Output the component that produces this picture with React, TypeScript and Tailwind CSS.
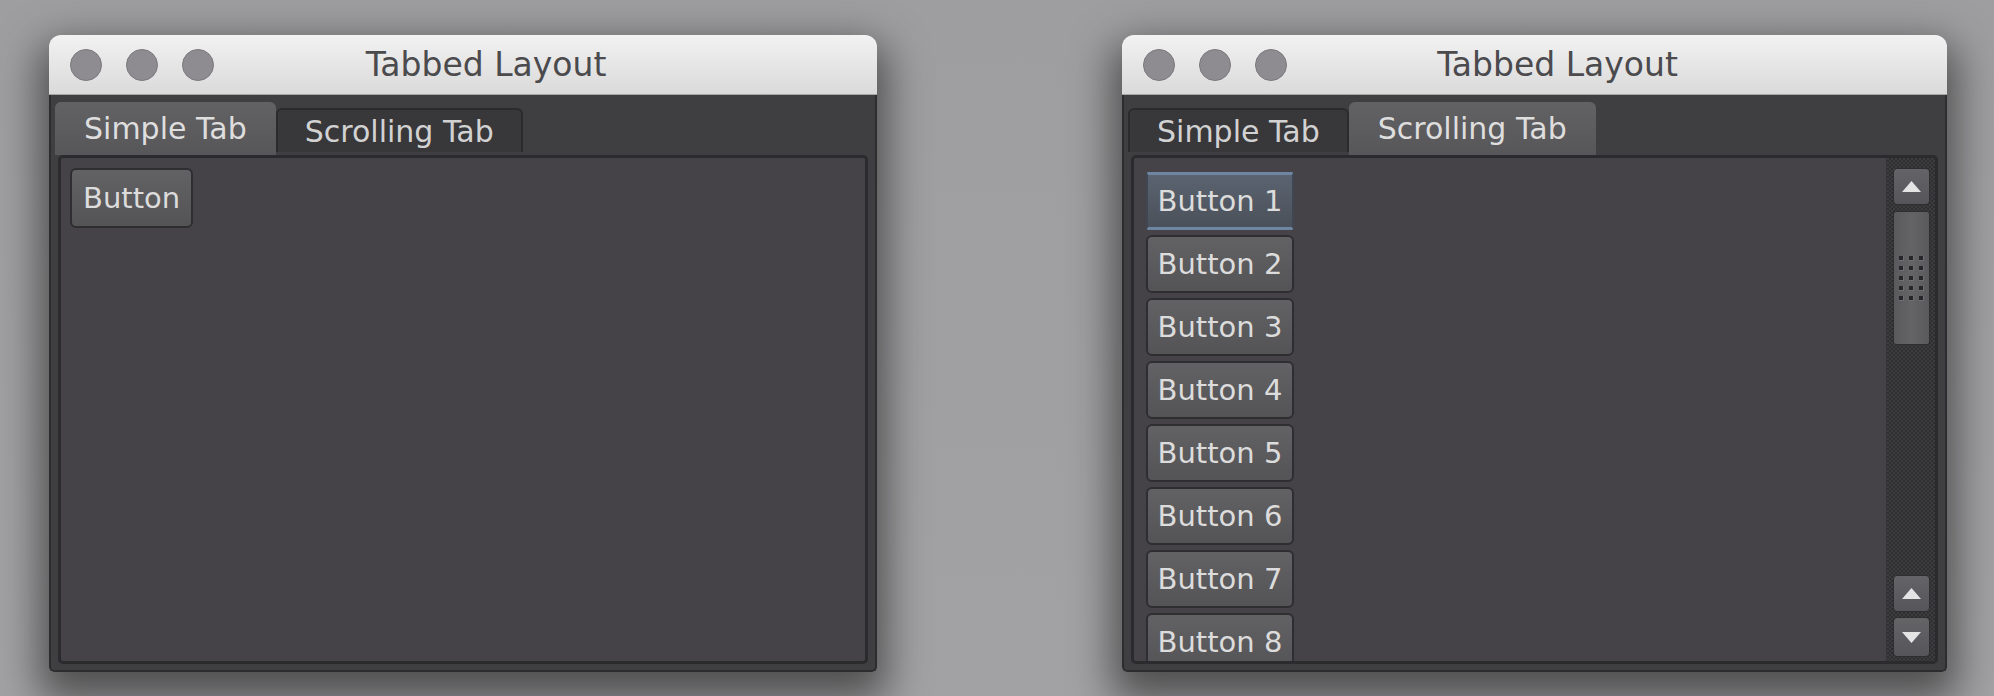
import React from "react";

type TabProps = { label: string; active?: boolean };

const TrafficLights = () => (
  <div className="flex gap-[24px]">
    {[0, 1, 2].map((i) => (
      <span
        key={i}
        className="size-[32px] rounded-full border border-[#7b797e] bg-[#8e8c91]"
      />
    ))}
  </div>
);

const TitleBar = () => (
  <div className="flex h-[60px] items-center rounded-t-[12px] border-b border-[#a6a6a6] bg-linear-to-b from-[#f2f2f2] to-[#dadada] pl-[21px]">
    <TrafficLights />
    <div className="flex-1 pr-[119px] text-center text-[33px] leading-none text-[#4b4a4d]">
      Tabbed Layout
    </div>
  </div>
);

const Tab = ({ label, active }: TabProps) =>
  active ? (
    <div className="flex h-[53px] items-center rounded-t-[6px] bg-linear-to-b from-[#626164] to-[#575659] px-[29px] text-[30px] leading-none text-[#dedede]">
      {label}
    </div>
  ) : (
    <div className="mt-[6px] flex h-[44px] items-center rounded-t-[6px] border-2 border-b-0 border-[#2b2a2d] bg-[#38373a] px-[27px] pt-[2px] text-[30px] leading-none text-[#d2d2d2]">
      {label}
    </div>
  );

const PushButton = ({ label, focused, wide }: { label: string; focused?: boolean; wide?: boolean }) => {
  if (focused) {
    return (
      <div className="flex h-[58px] w-[148px] shrink-0 items-center justify-center rounded-[3px] border-x-2 border-y-[3px] border-x-[#3e4753] border-y-[#6f86a2] bg-linear-to-b from-[#5a6370] to-[#4b515a] text-[29px] leading-none text-[#dcdcdc]">
        {label}
      </div>
    );
  }
  return (
    <div
      className={
        wide
          ? "flex h-[58px] w-[148px] shrink-0 items-center justify-center rounded-[6px] border-2 border-[#2e2d30] bg-linear-to-b from-[#626164] to-[#545356] text-[29px] leading-none text-[#dcdcdc]"
          : "flex h-[60px] items-center justify-center rounded-[6px] border-2 border-[#2e2d30] bg-linear-to-b from-[#626164] to-[#545356] px-[11px] text-[29px] leading-none text-[#dcdcdc]"
      }
    >
      {label}
    </div>
  );
};

const Arrow = ({ down }: { down?: boolean }) => (
  <svg width="19" height="11" viewBox="0 0 19 11">
    <polygon points={down ? "0,0 19,0 9.5,11" : "9.5,0 19,11 0,11"} fill="#e4e4e4" />
  </svg>
);

const ScrollButton = ({ down, className }: { down?: boolean; className: string }) => (
  <div className={className}>
    <Arrow down={down} />
  </div>
);

const ScrollBar = () => (
  <div className="flex w-[49px] shrink-0 flex-col items-center border-l border-[#363538] bg-[image:repeating-conic-gradient(#2f2e31_0%_25%,#3d3c3f_0%_50%)] bg-[length:4px_4px] pt-[10px] pb-[4px]">
    <ScrollButton className="flex h-[37px] w-[37px] items-center justify-center rounded-[4px] border border-[#2e2d30] bg-linear-to-b from-[#646366] to-[#56555a]" />
    {/* thumb */}
    <div className="mt-[6px] flex h-[134px] w-[37px] items-center justify-center rounded-[3px] border border-[#2e2d30] bg-linear-to-r from-[#5a595c] via-[#646366] to-[#5a595c]">
      <div className="grid grid-cols-3 gap-[5px]">
        {Array.from({ length: 15 }).map((_, i) => (
          <span key={i} className="size-[5px] border-b border-r border-[#6f6e72] bg-[#262528]" />
        ))}
      </div>
    </div>
    <div className="flex-1" />
    <ScrollButton className="flex h-[37px] w-[37px] items-center justify-center rounded-[4px] border border-[#2e2d30] bg-linear-to-b from-[#646366] to-[#56555a]" />
    <ScrollButton
      down
      className="mt-[5px] flex h-[40px] w-[37px] items-center justify-center rounded-[4px] border border-[#2e2d30] bg-linear-to-b from-[#646366] to-[#56555a]"
    />
  </div>
);

const SimpleWindow = () => (
  <div className="w-[828px] shrink-0 rounded-t-[12px] rounded-b-[5px] shadow-[0_18px_40px_10px_rgba(0,0,0,0.5)]">
    <TitleBar />
    <div className="rounded-b-[5px] border-x-2 border-b-2 border-[#2d2c2f] bg-[#3f3e41] pb-[6px]">
      <div className="flex h-[60px] items-start pl-[4px] pt-[7px]">
        <Tab label="Simple Tab" active />
        <Tab label="Scrolling Tab" />
      </div>
      <div className="mx-[7px] h-[509px] rounded-[5px] border-[3px] border-[#2b2a2d] bg-[#454347] pl-[9px] pt-[10px]">
        <div className="flex">
          <PushButton label="Button" />
        </div>
      </div>
    </div>
  </div>
);

const ScrollingWindow = () => (
  <div className="w-[825px] shrink-0 rounded-t-[12px] rounded-b-[5px] shadow-[0_18px_40px_10px_rgba(0,0,0,0.5)]">
    <TitleBar />
    <div className="rounded-b-[5px] border-x-2 border-b-2 border-[#2d2c2f] bg-[#3f3e41] pb-[6px]">
      <div className="flex h-[60px] items-start pl-[4px] pt-[7px]">
        <Tab label="Simple Tab" />
        <Tab label="Scrolling Tab" active />
      </div>
      <div className="mx-[7px] flex h-[509px] overflow-hidden rounded-[5px] border-[3px] border-[#2b2a2d] bg-[#454347]">
        <div className="flex flex-1 flex-col gap-[5px] overflow-hidden pl-[12px] pt-[14px]">
          {[1, 2, 3, 4, 5, 6, 7, 8].map((n) => (
            <PushButton key={n} label={`Button ${n}`} focused={n === 1} wide />
          ))}
        </div>
        <ScrollBar />
      </div>
    </div>
  </div>
);

export default function App() {
  return (
    <div className="flex h-[696px] w-full items-start gap-[245px] overflow-hidden bg-linear-to-b from-[#9e9d9f] to-[#a2a1a3] pl-[49px] pt-[35px] font-['DejaVu_Sans',sans-serif]">
      <SimpleWindow />
      <ScrollingWindow />
    </div>
  );
}
